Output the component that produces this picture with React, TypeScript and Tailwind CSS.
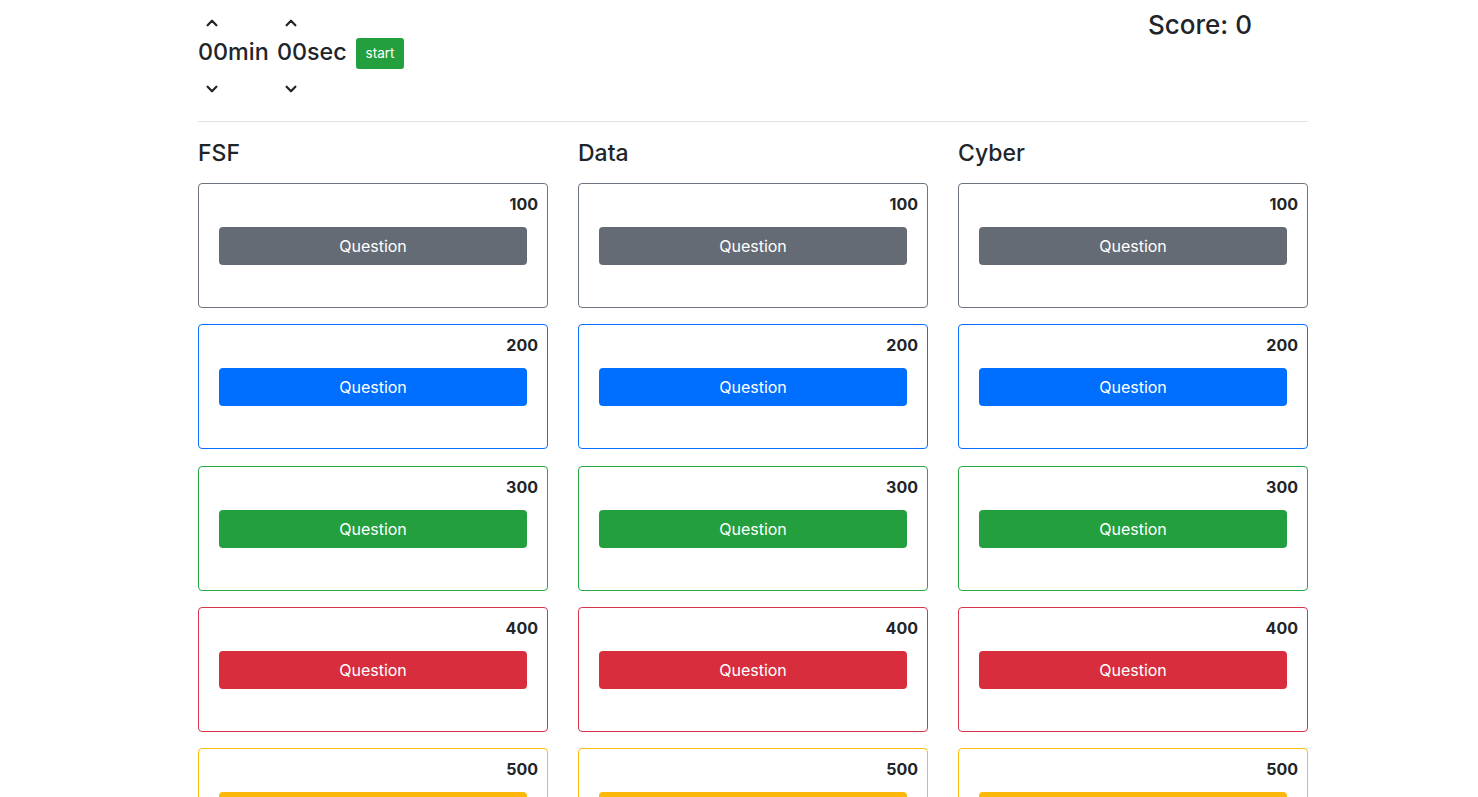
import React from "react";

const Up = () => (
  <svg width="14" height="14" viewBox="0 0 16 16" fill="none" stroke="#212529" strokeWidth="2.6" strokeLinecap="round" strokeLinejoin="round">
    <path d="M3 10.5 8 5.5l5 5" />
  </svg>
);
const Down = () => (
  <svg width="14" height="14" viewBox="0 0 16 16" fill="none" stroke="#212529" strokeWidth="2.6" strokeLinecap="round" strokeLinejoin="round">
    <path d="M3 5.5 8 10.5l5-5" />
  </svg>
);

const levels = [
  { pts: 100, border: "border-[#6c757d]", btn: "bg-[#646b74] text-white" },
  { pts: 200, border: "border-[#0a70ff]", btn: "bg-[#006eff] text-white" },
  { pts: 300, border: "border-[#28a745]", btn: "bg-[#239f3d] text-white" },
  { pts: 400, border: "border-[#d8354a]", btn: "bg-[#d72d3c] text-white" },
  { pts: 500, border: "border-[#fbbc0f]", btn: "bg-[#fbb80a] text-[#212529]" },
];

const cats = ["FSF", "Data", "Cyber"];

export default function App() {
  return (
    <div
      className="bg-white text-[#212529] overflow-hidden h-[797px]"
      style={{ fontFamily: "Inter, 'Noto Sans', 'Liberation Sans', sans-serif" }}
    >
      <div className="ml-[198px] w-[1110px]">
        <div className="flex justify-between h-[121px]">
          <div className="flex items-start pt-[16px]">
            <div className="flex flex-col w-[79px]">
              <div className="pl-[7px] h-[14px]"><Up /></div>
              <div className="text-[23.3px] leading-[30px] mt-[7px] font-[450]">00min</div>
              <div className="pl-[7px] h-[14px] mt-[15px]"><Down /></div>
            </div>
            <div className="flex flex-col w-[79px]">
              <div className="pl-[7px] h-[14px]"><Up /></div>
              <div className="text-[23.3px] leading-[30px] mt-[7px] font-[450]">00sec</div>
              <div className="pl-[7px] h-[14px] mt-[15px]"><Down /></div>
            </div>
            <button className="mt-[22px] h-[31px] w-[48px] rounded-[3px] bg-[#239f3d] text-white text-[13.5px] leading-none">
              start
            </button>
          </div>
          <div className="w-[160px] text-[26px] leading-[34px] pt-[8px] font-[450]">Score: 0</div>
        </div>
        <div className="h-px bg-[#e3e3e3]" />
        <div className="flex gap-[30px] pt-[16px]">
          {cats.map((c) => (
            <div key={c} className="w-[350px] flex flex-col">
              <div className="text-[23px] leading-[30px] font-medium h-[30px]">{c}</div>
              <div className="mt-[15px] flex flex-col gap-[16.25px]">
                {levels.map((l) => (
                  <div key={l.pts} className={`h-[125px] border rounded-[4px] ${l.border} flex flex-col`}>
                    <div className="text-right pr-[9px] pt-[8px] font-bold text-[16px] leading-6">{l.pts}</div>
                    <button className={`mx-[20px] mt-[11px] h-[38px] rounded-[4px] text-[16px] ${l.btn}`}>
                      Question
                    </button>
                  </div>
                ))}
              </div>
            </div>
          ))}
        </div>
      </div>
    </div>
  );
}
